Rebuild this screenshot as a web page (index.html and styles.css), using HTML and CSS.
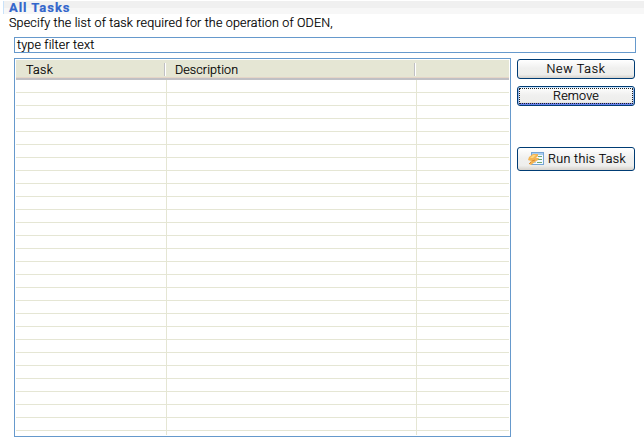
FILE: index.html
```html
<!DOCTYPE html>
<html lang="en">
<head>
<meta charset="utf-8">
<title>All Tasks</title>
<link rel="stylesheet" href="styles.css">
</head>
<body>
<header class="section-title"><h1>All Tasks</h1></header>
<p class="intro">Specify the list of task required for the operation of ODEN,</p>
<div class="filter"><span>type filter text</span></div>
<main class="content">
  <section class="table">
    <div class="table-head">
      <div class="th th-task"><span>Task</span></div>
      <div class="th th-description"><span>Description</span></div>
      <div class="th-rest"></div>
    </div>
    <div class="table-body">
      <div class="col col-task"></div>
      <div class="col col-description"></div>
    </div>
  </section>
  <aside class="actions">
    <button class="btn new"><span>New Task</span></button>
    <button class="btn remove"><span>Remove</span></button>
    <button class="btn run">
      <svg class="icon" width="17" height="16" viewBox="0 0 17 16">
        <rect x="3.5" y="1.5" width="12" height="12" fill="#f4faff" stroke="#75a5d5"/>
        <path d="M4 2h11v2H4z" fill="#a9cdf0"/>
        <path d="M10 5.5h4M10 8.5h4M9 11.5h5" stroke="#6fa873"/>
        <path d="M5 11.5h3" stroke="#a9cdf0"/>
        <path d="M5 3h5v2L8 7h3l-1 2-3 2-4 3-2-1 2-3-3-1 1-3z" fill="#f3b453"/>
        <path d="M5 4h3L5 7H2z" fill="#ffd780"/>
        <path d="M4 10l3-1M1 13l2-2" stroke="#d98a35"/>
      </svg>
      <span>Run this Task</span>
    </button>
  </aside>
</main>
</body>
</html>
```
FILE: styles.css
```css
* { box-sizing: border-box; }
body {
  margin: 0;
  width: 644px;
  height: 444px;
  padding-top: 1px;
  overflow: hidden;
  background: #fff;
  color: #000;
  font: 300 12.5px/14px Roboto, "Liberation Sans", sans-serif;
  -webkit-text-stroke: 0.2px;
}
.section-title {
  height: 13px;
  margin-left: 3px;
  padding-left: 5px;
  border-left: 1px solid #c9e2fa;
  background: linear-gradient(#f0f0f0 7px, #f7f7f7 7px);
}
h1 {
  margin: 0;
  color: #3366cc;
  font: bold 13px/13px Roboto, "Liberation Sans", sans-serif;
  letter-spacing: 0.95px;
}
.intro {
  margin: 2px 0 0 9px;
  height: 21px;
  white-space: nowrap;
  letter-spacing: 0.17px;
}
.filter {
  width: 622px;
  height: 16px;
  margin-left: 14px;
  padding-left: 2px;
  border: 1px solid #6699cc;
  letter-spacing: 0.18px;
}
.content {
  display: flex;
  margin: 5px 0 0 14px;
  gap: 6px;
}
.table {
  display: flex;
  flex-direction: column;
  width: 497px;
  height: 379px;
  padding: 1px;
  border: 1px solid #6699cc;
}
.table-head {
  display: flex;
  height: 20px;
  padding-top: 3px;
  background: linear-gradient(#e5e6d4 17px, #e5d5c7 17px 18px, #c0c0c4 18px);
}
.th {
  height: 13px;
  border-right: 1px solid #fff;
  box-shadow: inset -1px 0 #c0c0c4;
}
.th-task { width: 150px; padding-left: 10px; letter-spacing: 0.3px; }
.th-description { width: 250px; padding-left: 9px; letter-spacing: 0.1px; }
.table-body {
  display: flex;
  flex: 1;
  background: repeating-linear-gradient(transparent 0 12px, #e5e6d4 12px 13px);
}
.col { border-right: 1px solid #e5e6d4; }
.col-task { width: 151px; }
.col-description { width: 250px; }
.actions {
  display: flex;
  flex-direction: column;
  width: 118px;
  padding-top: 1px;
}
.btn {
  display: flex;
  align-items: center;
  justify-content: center;
  height: 20px;
  padding: 0;
  border: 1px solid #003c74;
  border-radius: 3px;
  background: linear-gradient(#fff, #f0f0ef 45%, #eeeeec 80%, #d6d2cc);
  color: #000;
  font: inherit;
  white-space: nowrap;
}
.new { letter-spacing: 0.7px; }
.remove {
  position: relative;
  margin-top: 7px;
  letter-spacing: 0.2px;
  box-shadow: inset 0 1px #cee7ff, inset 1px 0 #91b3ec, inset -1px 0 #91b3ec, inset 0 -2px #6982ee;
}
.remove::after {
  content: "";
  position: absolute;
  inset: 1px;
  border: 1px dotted #222;
}
.run { height: 24px; margin-top: 41px; gap: 3px; padding-left: 2px; letter-spacing: 0.35px; }
```
